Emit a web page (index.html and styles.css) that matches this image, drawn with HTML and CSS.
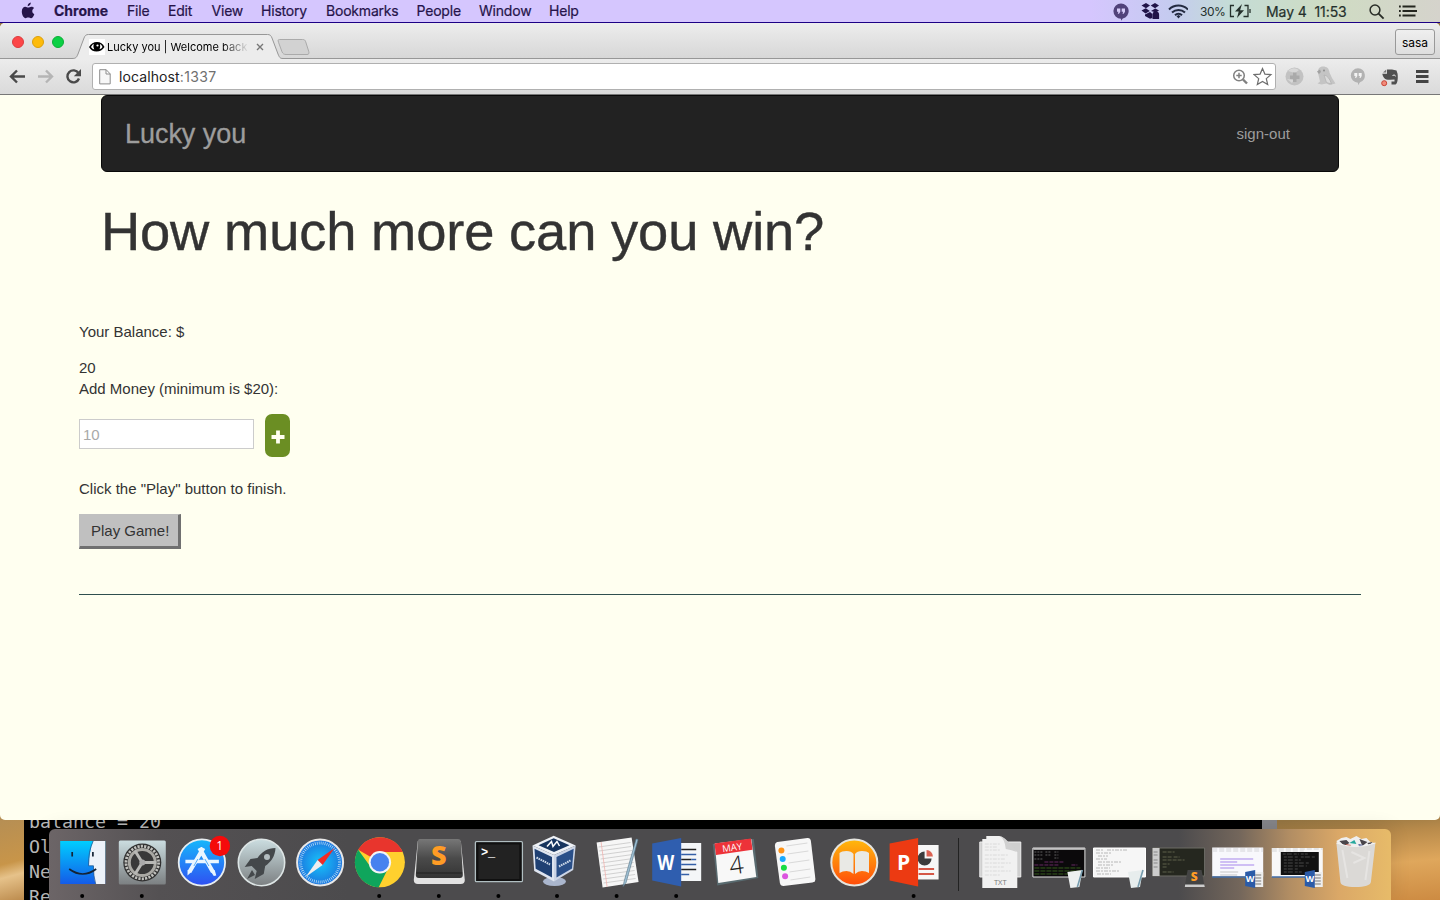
FILE: index.html
```html
<!DOCTYPE html>
<html lang="en">
<head>
<meta charset="utf-8">
<title>Lucky you | Welcome back</title>
<link rel="stylesheet" href="styles.css">
</head>
<body>
<div class="desktop">
  <header class="menubar">
    <svg class="apple" width="14" height="17" viewBox="0 0 14 17"><path d="M9.8 0.6C9.9 2.6 8.5 4.2 6.7 4.2 6.5 2.4 8 0.9 9.8 0.6zM13.3 12.2c-.7 1.9-1.900 4-3.300 4-1.100 0-1.500-.7-2.800-.7s-1.700.7-2.700.7C2.900 16.200.8 13.200.8 9.600.8 6.500 2.500 4.800 4.300 4.800c1.200 0 2.100.8 2.900.8s1.900-.9 3.300-.9c1.100 0 2 .6 2.600 1.400-2.600 1.600-2.200 5.100.2 6.100z" fill="#26144a"/></svg>
    <nav class="menus"><b>Chrome</b><span>File</span><span>Edit</span><span>View</span><span>History</span><span>Bookmarks</span><span>People</span><span>Window</span><span>Help</span></nav>
    <div class="status">
      <svg width="16" height="19" viewBox="1113 1 16 19"><path d="M1121 2.500a7.600 7.600 0 0 1 1.800 15l-1.800 2.200v-2a7.600 7.600 0 0 1 0-15.200z" fill="#51427a"/><path d="M1117 7.500h3.300v3.200l-1.300 2h-1.200l.6-2h-1.400zM1121.700 7.500h3.300v3.200l-1.300 2h-1.200l.6-2h-1.400z" fill="#d6cbf8"/></svg>
      <svg width="19" height="18" viewBox="1141 2 19 18"><path d="M1146 3l4 2.600-4 2.600-4.500-2.800zM1155 3l4 2.500-4 2.800-4.300-2.700zM1141.500 10.600l4.300-2.300 4 2.800-4.300 2.500zM1151 11l4.300-2.600 3.700 2-3 2zM1145 14.400l5-2.500 2.400 2v4.200l-2.400.7-5-2.800z" fill="#201348"/><path d="M1152.500 19v-4.200a3.300 3.300 0 0 1 6.600 0v4.200z" fill="#201348"/></svg>
      <svg width="20" height="15" viewBox="1168 3 20 15" fill="none" stroke="#232a40" stroke-width="2"><path d="M1169 8.500a13.500 13.500 0 0 1 19 0M1172 11.500a9.500 9.500 0 0 1 13 0M1175 14.300a5 5 0 0 1 7 0"/><path d="M1176.500 15.200l2-1.200 2 1.200-2 2.200z" fill="#232a40" stroke="none"/></svg>
      <span class="percent">30%</span>
      <svg width="24" height="14" viewBox="1229 4 24 14"><path d="M1234 5.500h-3.500v11h3.500M1244.500 5.500h3.500v11h-4.500M1250 9v4" fill="none" stroke="#25302c" stroke-width="1.300"/><path d="M1242 4l-7 7.500h3.700L1237 18l7-7.700h-3.900z" fill="#25302c"/></svg>
      <span class="clock">May 4&nbsp; 11:53</span>
      <svg width="16" height="16" viewBox="1369 4 16 16" fill="none" stroke="#292d27" stroke-width="1.500"><circle cx="1375" cy="10" r="4.900"/><path d="M1378.600 13.600l5 5" stroke-width="1.800"/></svg>
      <svg width="20" height="12" viewBox="1398 5 20 12" stroke="#24261f" stroke-width="1.800"><path d="M1402.500 6.500h13M1402.500 11h14.500M1402.500 15.500h13M1399 6.500h1.800M1399 11h1.800M1399 15.500h1.800"/></svg>
    </div>
  </header>

  <section class="terminal"><pre>balance = 20
Ol
Ne
Re</pre></section>

  <main class="window">
    <div class="titlebar">
      <div class="lights"><i class="red"></i><i class="amber"></i><i class="green"></i></div>
      <div class="tab">
        <svg class="tabshape" width="240" height="26" viewBox="72 33 240 26"><path d="M72 58.500c4 0 4.500-1 6-4.500l6-16c1-2.500 2-3.500 4.500-3.500h179c2.500 0 3.500 1 4.500 3.500l6 16c1.500 3.500 2 4.500 5 4.500h27v1H72z" fill="#ececec"/><path d="M72 58.500c4 0 4.500-1 6-4.500l6-16c1-2.500 2-3.500 4.500-3.500h179c2.500 0 3.500 1 4.500 3.500l6 16c1.500 3.500 2 4.500 5 4.500h29" fill="none" stroke="#979797"/><path d="M279.500 39.500h23c2 0 2.500.5 3.200 2.300l3 9.500c.7 2.300 0 3.200-1.700 3.200h-21c-2 0-3-.6-4-2.700l-3.500-9.500c-.6-2-.6-2.800 1-2.800z" fill="#d2d2d2" stroke="#aaa"/></svg>
        <div class="tabcontent">
          <svg width="16" height="16" viewBox="89 39 16 16"><path fill="#fff" d="M89 39h16v16H89z"/><path d="M89 47q3-5 8-5t7.500 5q-3 4.500-8 4.500T89 47z" fill="#000"/><path d="M91 47q1.200-2.500 2.700-3.200-.8 3 .6 5.700-2-.5-3.300-2.500zM102.500 47q-1-2.300-2.500-3 .6 3-.5 5.300 2-.5 3-2.300z" fill="#fff"/><circle cx="97.500" cy="45.500" r="1.100" fill="#fff"/></svg>
          <span class="tabtitle">Lucky you | Welcome back,</span>
          <svg width="8" height="8" viewBox="0 0 8 8"><path d="M1 1l6 6M7 1L1 7" stroke="#777" stroke-width="1.400"/></svg>
        </div>
      </div>
      <div class="profile">sasa</div>
    </div>
    <div class="toolbar">
      <svg width="92" height="35" viewBox="0 59 92 35" fill="none" stroke-width="2.400"><path d="M25 76.500H11.500M17 70.500l-6 6 6 6" stroke="#4a4a4a"/><path d="M38 76.500h13.500M46 70.500l6 6-6 6" stroke="#b5b5b5"/><path d="M78.500 73.200a6 6 0 1 0 .5 5.300" stroke="#4a4a4a"/><path d="M81 69v7.200h-7.200z" fill="#4a4a4a"/></svg>
      <div class="address">
        <svg width="12" height="16" viewBox="0 0 12 16"><path d="M.7.700h6.500l4 4.200v10H.7zM7 .7V5h4.200" fill="#f7f7f7" stroke="#8c8c8c"/></svg>
        <span class="url">localhost<em>:1337</em></span>
        <svg width="16" height="17" viewBox="1232 68 16 17" fill="none" stroke="#808080" stroke-width="1.500"><circle cx="1239" cy="75.500" r="5.300"/><path d="M1236.300 75.500h5.400M1239 72.800v5.400"/><path d="M1243 79.500l4 4" stroke-width="2.400"/></svg>
        <svg width="20" height="19" viewBox="1253 67 20 19"><path d="M1262.500 68.500l2.400 5.600 6 .5-4.600 4 1.400 6-5.200-3.200-5.200 3.200 1.400-6-4.600-4 6-.5z" fill="#fff" stroke="#6e6e6e" stroke-width="1.200"/></svg>
      </div>
      <svg class="extensions" width="164" height="35" viewBox="1276 59 164 35">
        <circle cx="1294.500" cy="76.500" r="9" fill="#c2c2c2"/><path d="M1288 71q5-5 11-1l-4 3zM1287 79l5 4 2-3" fill="#d8d8d8"/><path d="M1293 72.500h3.500v3h3v3.500h-3v3h-3.500v-3h-3v-3.500h3z" fill="#aaa"/>
        <path d="M1318 73c-.5-4 1.500-6.500 5-6.500 4 0 6 2 6.500 6l2.500 5.500 3.500 5.500-6 1.500-3-1.500-5 1-4-1 2.500-2z" fill="#c4c4c4"/><path d="M1324 75q5 1 7.500 9l-5-1.500z" fill="#dadada" stroke="#b0b0b0" stroke-width=".7"/><path d="M1320 69.500l-3 2 2 2.500 2-2z" fill="#a2a2a2"/><circle cx="1324" cy="70.500" r=".9" fill="#888"/>
        <path d="M1358 68.300a7.200 7.200 0 0 1 2 14l-2 3v-2.600a7.200 7.200 0 0 1 0-14.400z" fill="#b2b2b2"/><path d="M1354.300 73h3v3l-1.200 2h-1l.4-2h-1.200zM1358.700 73h3v3l-1.200 2h-1l.4-2h-1.200z" fill="#f3f3f3"/>
        <path d="M1387 69.500h5l4.500 1 1 3c.7 4 .2 10-2 11h-4v-3h3v-2l-4 .2c-5 .5-7.500-1.800-8.200-6h4.700z" fill="#505050"/><path d="M1383 72.500l3.200-3v3z" fill="#777"/><path d="M1392.500 75.500l2-.6 1 1.500" fill="none" stroke="#eee"/><circle cx="1384.200" cy="83.200" r="2.500" fill="#f28b7b" stroke="#c84536"/>
        <path d="M1416 71.500h12.500M1416 76.500h12.500M1416 81.500h12.500" stroke="#444" stroke-width="2.800"/>
      </svg>
    </div>
    <div class="page">
      <div class="navbar"><span class="brand">Lucky you</span><span class="signout">sign-out</span></div>
      <h1>How much more can you win?</h1>
      <div class="account">
        <p class="balance">Your Balance: $</p>
        <div class="amount">20</div>
        <div class="addlabel">Add Money (minimum is $20):</div>
        <div class="addrow">
          <div class="field">10</div>
          <div class="plus"><svg width="14" height="14" viewBox="0 0 14 14"><path d="M7 .5v13M.5 7h13" stroke="#fffff0" stroke-width="3.800"/></svg></div>
        </div>
        <p class="hint">Click the "Play" button to finish.</p>
        <div class="play">Play Game!</div>
      </div>
    </div>
  </main>

  <footer class="dock">
    <svg viewBox="52.8 829 59.4 71"><defs><linearGradient id="fb" x2="0" y2="1"><stop stop-color="#00ceff"/><stop offset="1" stop-color="#145be8"/></linearGradient><linearGradient id="grey" x2="0" y2="1"><stop stop-color="#cbdde0"/><stop offset="1" stop-color="#7c8082"/></linearGradient><linearGradient id="store" x2="0" y2="1"><stop stop-color="#16b8fb"/><stop offset="1" stop-color="#2f4ff2"/></linearGradient><linearGradient id="books" x2="0" y2="1"><stop stop-color="#ffb90d"/><stop offset="1" stop-color="#ff4b0a"/></linearGradient><linearGradient id="subl" x2="0" y2="1"><stop stop-color="#777"/><stop offset=".5" stop-color="#4a4a4a"/><stop offset="1" stop-color="#343434"/></linearGradient><radialGradient id="saf"><stop stop-color="#17c5fa"/><stop offset="1" stop-color="#1c74de"/></radialGradient></defs>
      <path d="M60 841h45v43H60z" fill="url(#fb)"/><path d="M93 841h12v43H95.500q-2-5-2-18.200h-4.800q.3-14 4.300-24.800z" fill="#edf2f9"/><path d="M93 841q-5 10-4.600 24.800h4.800q-.1 10 2.300 18.200" fill="none" stroke="#2b5c93" stroke-width=".8"/><path d="M72 852v4.500M92.700 852v4.500" stroke="#152335" stroke-width="1.700"/><path d="M69 869q13.500 10 27 0" fill="none" stroke="#152335" stroke-width="1.700"/><circle cx="82" cy="896" r="2"/></svg>
    <svg viewBox="112.2 829 59.4 71"><rect x="119" y="840.500" width="47" height="44" rx="1.500" fill="url(#grey)"/><circle cx="142.500" cy="862.500" r="19" fill="#303030"/><circle cx="142.500" cy="862.500" r="16.300" fill="none" stroke="#c1c1bd" stroke-width="2.800" stroke-dasharray="2.200 1.200"/><circle cx="142.500" cy="862.500" r="13" fill="#393939" stroke="#aaa9a4" stroke-width="3"/><path d="M142.500 862.500h14M142.500 862.500l-7.500-12M142.500 862.500l-7.500 12" stroke="#b8b8b5" stroke-width="3"/><circle cx="142.500" cy="862.500" r="3" fill="#aaa"/><circle cx="142" cy="896" r="2"/></svg>
    <svg viewBox="171.6 829 59.4 71"><circle cx="201.500" cy="862.500" r="23.200" fill="url(#store)" stroke="#e8eef1" stroke-width="1.800"/><path d="M185 861.500h33.500" stroke="#e9f6ff" stroke-width="3.600"/><path d="M203 848l-14 24M199 848l13.500 24" stroke="#e9f6ff" stroke-width="4.200"/><path d="M187.200 870l3.700 2-3.800 3.500zM210.700 872l3.600-2 1.600 5.500-2.500.5z" fill="#e9f6ff"/><path d="M193.500 866l4-7M208.500 866l-4-7" stroke="#55aef4" stroke-width="1"/><circle cx="219.500" cy="846" r="10.200" fill="#f50b0b"/><text class="d-badge" x="219.200" y="850.200">1</text></svg>
    <svg viewBox="231 829 59.4 71"><circle cx="261.500" cy="862.500" r="23.200" fill="url(#grey)" stroke="#dde5e5" stroke-width="1.600"/><path d="M275.500 848c-8 0-14 4-18 10l-7 1-5.800 8 7-1 5 5-2 8 9-5 1.500-8c6-4 10-10 10.300-18zM252 870l-5 9 8-4z" fill="#44484b"/><circle cx="267" cy="857" r="3" fill="#b3bdc0"/></svg>
    <svg viewBox="290.4 829 59.4 71"><circle cx="320.500" cy="862.500" r="23" fill="url(#saf)" stroke="#e8e8e8" stroke-width="2"/><circle cx="320.500" cy="862.500" r="19.500" fill="none" stroke="#c3e2f8" stroke-width="3" stroke-dasharray=".7 1.300"/><path d="M335 848l-12 17-5-5z" fill="#f22b26"/><path d="M306 877l12-17 5 5z" fill="#eee"/></svg>
    <svg viewBox="349.8 829 59.4 71"><circle cx="379.700" cy="862.300" r="25" fill="#ffd02e"/><path d="M379.700 862.300L358 849.800A25 25 0 0 1 402.500 852H379.700z" fill="#e8352d"/><path d="M358 849.800A25 25 0 0 0 378.500 887.300l9.700-19.600-8.500-5.400-8.700 5.400z" fill="#0fa55c"/><circle cx="379.700" cy="862.300" r="11.200" fill="#f5f5f5"/><circle cx="379.700" cy="862.300" r="9.200" fill="#4782ef"/><circle cx="379" cy="896" r="2"/></svg>
    <svg viewBox="409.2 829 59.4 71"><path d="M418 841h43l4 39q0 4-4 4h-43q-4 0-4-4z" fill="#e2e2e2"/><path d="M420 839h38q3 0 3.200 3l1.800 33q0 3-3 3h-41q-3 0-3-3l2-33q.2-3 2-3z" fill="url(#subl)"/><path d="M416.500 873h46" stroke="#202020"/><text class="d-s" x="439" y="865.500">S</text><circle cx="439" cy="896" r="2"/></svg>
    <svg viewBox="468.6 829 59.4 71"><rect x="475" y="841.700" width="47" height="40" rx="1" fill="#222" stroke="#b0bec1" stroke-width="1.300"/><rect x="477" y="843.500" width="43" height="36.500" fill="none" stroke="#101010" stroke-width="2"/><text class="d-term" x="480.500" y="856">&gt;_</text><circle cx="498" cy="896" r="2"/></svg>
    <svg viewBox="528 829 59.4 71"><ellipse cx="554.500" cy="881.500" rx="11.500" ry="4.500" fill="#aab6cd"/><path d="M553.700 835.800l22 9.700-21.700 9.500-21.500-9.500z" fill="#eef1f6"/><path d="M553.700 838.300l15.800 7-15.500 6.800-15.500-6.800z" fill="#17345e"/><path d="M532.500 845.500L554 855v26.500L534.200 871z" fill="#dfe5f0"/><path d="M575.700 845.500L554 855v26.500L573.200 870z" fill="#ccd5e6"/><path d="M534.500 848.800l17.500 8.200v20.500l-16.300-8.800z" fill="#1f4073"/><path d="M573.700 848.800L556.500 857v20.500l15.500-9z" fill="#2a4f88"/><path d="M547 846.500l4.500-5 1.500 5 4-5 2.500 4.500" fill="none" stroke="#fff" stroke-width="1.500"/><path d="M536.500 857.500l13.500 7M559 866.500l11.500-6" stroke="#cdd9e8" stroke-width="2" stroke-dasharray="1.600 .7"/><circle cx="557" cy="896" r="2"/></svg>
    <svg viewBox="587.4 829 59.4 71"><path d="M597 842.500l35-5 7 44.500-36 5.500z" fill="#f6f6f6"/><path d="M599 847l32-4.500M599.500 851l32-4.500M600 855l32.500-4.500M601 859l32-4.500M601.500 863l32-4.500M602 867l32-4.500M602.500 871l32-4.500M603 875l32-4.500M603.500 879l32-4.500M604 883l32-4.500" stroke="#c6c6c6" stroke-width=".8"/><path d="M601.500 842l6 45" stroke="#f1b3af" stroke-width=".8"/><path d="M636.500 839l-12 42.500-1 5 3-4 12-43z" fill="#9fc0d3" stroke="#547286" stroke-width=".6"/><circle cx="617" cy="896" r="2"/></svg>
    <svg viewBox="646.8 829 59.4 71"><path d="M680 843h21v38h-21z" fill="#f4f6f8"/><path d="M681 849.500h15M681 859.500h10M681 869.500h15" stroke="#222" stroke-width="1.700"/><path d="M681 854.500h15M691 859.500h5M681 864.500h15M681 874.500h8" stroke="#345fa7" stroke-width="1.700"/><path d="M652 843.500l29-5.500v48.500l-29-6z" fill="#2f5eaf"/><text class="d-office d-narrow" x="665.500" y="870" textLength="17" lengthAdjust="spacingAndGlyphs">W</text><circle cx="676" cy="896" r="2"/></svg>
    <svg viewBox="706.2 829 59.4 71"><path d="M713 844l41-5 4.500 39-41 7.500z" fill="#596b70"/><path d="M715 843.500l36.500-4.500 5 38-38 6z" fill="#f8f8f8"/><path d="M714.700 843.500l36.500-5 1.500 11.300-36.500 5.200z" fill="#ed3239"/><g transform="rotate(-8 736 862)"><text class="d-may" x="734.500" y="850.500">MAY</text><text class="d-date" x="736" y="874">4</text></g></svg>
    <svg viewBox="765.6 829 59.4 71"><path d="M778 842l30-4q3-.3 3.500 3l4.500 38q0 3-3 3.500l-29 3.500q-3 0-3.500-3l-5-37q0-3.500 2.500-4z" fill="#f7f7f7"/><path d="M787 846l21-3M788 854l21-3M789 863l21-3M790 872l21-3M791 880l20-3" stroke="#ccc" stroke-width=".7"/><circle cx="782" cy="850.500" r="3" fill="#ff9317"/><circle cx="783.300" cy="859" r="3" fill="#18a8fc"/><circle cx="784.500" cy="867.700" r="3" fill="#15dc41"/><circle cx="785.700" cy="876.300" r="3" fill="#dc55df"/></svg>
    <svg viewBox="825 829 59.4 71"><circle cx="854.300" cy="862.500" r="23" fill="url(#books)" stroke="#e5e5df" stroke-width="2"/><path d="M839.500 853q2-2 7-2 5 0 7 3v20q-3-3-7-3t-7 2zM869 853q-2-2-7-2-5 0-7 3v20q3-3 7-3t7 2z" fill="#e9e9e5"/></svg>
    <svg viewBox="884.4 829 59.4 71"><path d="M917 845h22v34.500h-22z" fill="#f7f7f7"/><path d="M925 851.500a7 7 0 1 0 7 7h-7z" fill="#3b3b3b"/><path d="M927 850a6.500 6.500 0 0 1 6.300 6.500H927z" fill="#dc6252"/><path d="M919 869h15.500M919 874h15.500" stroke="#d55747" stroke-width="1.800"/><path d="M890 843.500l28.500-5.500v48.500l-28.500-6z" fill="#ec3a12"/><text class="d-office" x="904" y="870">P</text><circle cx="914" cy="896" r="2"/></svg>
    <div class="separator"></div>
    <svg viewBox="971.2 829 59.4 71"><path d="M980 842h41v35h-41z" fill="#cfcfcf" stroke="#eee"/><path d="M982.500 839h4v-3h13q5 1 9 7t9 9v36h-35z" fill="#f1f1f1"/><path d="M1000 836q5 3 6 13 6 1 11 3-3-6-7-8-4-6-10-8z" fill="#d0d0d0"/><path d="M985 844h16M985 847h13M985 850h16M985 855h24M985 859h20M985 863h26M985 867h19M985 871h26M985 875h16" stroke="#d6d6d6" stroke-width=".8" stroke-dasharray="4 1 2 1"/><text class="d-txt" x="1000.500" y="885">TXT</text></svg>
    <svg viewBox="1030.6 829 59.4 71"><path d="M1033.500 848h52v29h-52z" fill="#0b090b" stroke="#e4e4e4"/><path d="M1034 849h51" stroke="#ddd" stroke-width="1.500"/><path d="M1035 852h8m3 0h5m4 0h4M1035 855h8m3 0h5m4 0h4M1035 859h8m12-1h4" stroke="#777" stroke-width=".8" stroke-dasharray="2 1"/><path d="M1035 865h25m-15-3h20m7 3h6" stroke="#7d3279" stroke-width=".8" stroke-dasharray="4 1"/><path d="M1035 868h46M1035 871h46M1035 874h46" stroke="#365e1d" stroke-dasharray="5 1"/><path d="M1068 872l15-2-3 17-9 1z" fill="#edf0f0"/><path d="M1083 870l-5 17" stroke="#759bad" stroke-width="1.600"/></svg>
    <svg viewBox="1090 829 59.4 71"><path d="M1093.500 848h52v29h-52z" fill="#f6f6f6" stroke="#fff"/><path d="M1096 850h7m4 0h20M1096 853h15M1098 856h10M1096 859h11M1098 862h24M1098 865h16M1096 868h14M1096 871h23M1097 874h14" stroke="#aaa" stroke-width=".8" stroke-dasharray="4 1 2 1"/><path d="M1128 872l15-2-3 17-9 1z" fill="#e7eded"/><path d="M1143 870l-5 17" stroke="#759bad" stroke-width="1.600"/></svg>
    <svg viewBox="1149.4 829 59.4 71"><path d="M1153 848h52v28h-52z" fill="#25271f" stroke="#6c6c65"/><path d="M1153 848h7v28h-7z" fill="#ccc"/><path d="M1154 852h4m-4 3h4m-4 5h4m-4 3h4m-4 4h4" stroke="#888"/><path d="M1163 852h12m-12 5h9m2 0h6m-17 3h22m-22 4h7m-7 3h5m-5 5h11" stroke="#6c7055" stroke-width=".8" stroke-dasharray="4 1"/><path d="M1188 870h14l3 17h-20z" fill="#444"/><path d="M1185.500 884.500l-.3 2.500h20l-.5-2.500z" fill="#ccc"/><text class="d-mini" x="1194.500" y="881">S</text></svg>
    <svg viewBox="1208.8 829 59.4 71"><path d="M1212 847.500h51v29h-51z" fill="#f8f8fc"/><path d="M1212 849h51m-51 2h51" stroke="#d5d5d9" stroke-dasharray="5 2"/><path d="M1220 859h33m-33 3h17m-17 3h34m-34 3h14" stroke="#a686ec"/><path d="M1220 872h18m-18 3h17" stroke="#c4c4c4"/><path d="M1212 877h40" stroke="#416ca9" stroke-width="1.500"/><path d="M1253 872h10v15h-10z" fill="#eee"/><path d="M1255 875h6m-6 3h6m-6 3h6m-6 3h6" stroke="#777"/><path d="M1245 872l10-2v18l-10-2z" fill="#2b5ba8"/><text class="d-mini-w" x="1250" y="882">W</text></svg>
    <svg viewBox="1268.2 829 59.4 71"><path d="M1272 848h51v29h-51z" fill="#f8f8f8"/><path d="M1272 849h51m-51 2h32" stroke="#d5d5d5" stroke-dasharray="5 2"/><path d="M1281 852h38v23h-38z" fill="#111"/><path d="M1283 854h16m2 0h7m-24 3h14m3 0h14m-31 3h17m-17 3h25m-25 3h23m-23 3h15m-15 3h18" stroke="#555" stroke-width=".8" stroke-dasharray="3 1 5 2"/><path d="M1272 877h40" stroke="#416ca9" stroke-width="1.500"/><path d="M1313 872h10v15h-10z" fill="#eee"/><path d="M1315 875h6m-6 3h6m-6 3h6m-6 3h6" stroke="#777"/><path d="M1305 872l10-2v18l-10-2z" fill="#2b5ba8"/><text class="d-mini-w" x="1310" y="882">W</text></svg>
    <svg viewBox="1327.6 829 59.4 71"><path d="M1337 841l5-3 5-1 4 2 6-3 5 3 5-1 4 4 4 1-3 6h-31z" fill="#efefef"/><path d="M1340 841l5 5 5-3-3-3zM1360 839l8 3-5 4zM1368 843l5-1-3 4z" fill="#49454a"/><path d="M1350 843l5-3 2 4z" fill="#27a89d"/><path d="M1346 844l6 1-3 3z" fill="#bd5847"/><path d="M1359 844l5 1-4 3z" fill="#46538c"/><path d="M1337 843q19 7 39 0l-4.500 39q-1 5-15.500 5t-15-5z" fill="#dbd9d6"/><path d="M1337 843q19 7 39 0" fill="none" stroke="#f4f4f4"/><path d="M1343 850l5 28M1352 852l13 6-11 5M1370 851l-4 29" fill="none" stroke="#fff" stroke-width="2" opacity=".3"/></svg>
  </footer>
</div>
</body>
</html>
```
FILE: styles.css
```css
* { box-sizing: border-box; }
body { margin: 0; }
svg { display: block; flex: none; }
.desktop { position: relative; width: 1440px; height: 900px; overflow: hidden; display: flex; flex-direction: column; font-family: Inter, sans-serif; background: linear-gradient(175deg, #967642 91%, #b98b4b 93%, #dfa75c 96%, #cd8b42); }
.desktop::before { content: ""; position: absolute; left: 0; top: 815px; width: 24px; height: 85px; background: linear-gradient(165deg, #b48e55, #c89549 55%, #e6c28a 70%, #bc8b4d); }
.menubar { height: 23px; flex: none; display: flex; align-items: center; padding-left: 21px; border-bottom: 1px solid #1c0085; background: linear-gradient(90deg, #d5c6fe 1090px, #c5cbf0 1170px, #c4dcd6 1230px, #cfdcc3 1330px, #d5d3cc); color: #26144a; font-size: 14px; }
.apple { margin-bottom: 1px; }
.menus { display: grid; grid-template-columns: 73px 41px 43.5px 49.500px 65px 90.500px 62.500px 70px 60px; margin-left: 19px; letter-spacing: -.2px; font-size: 14px; line-height: 22px; -webkit-text-stroke: .2px; }
.menus b { letter-spacing: 0; }
.status { display: flex; align-items: center; margin-left: auto; padding-right: 22px; color: #25302c; }
.status svg:nth-of-type(2) { margin-left: 12px; }
.status svg:nth-of-type(3) { margin-left: 8px; }
.percent { font-size: 12px; width: 29px; margin-left: 12px; letter-spacing: -.5px; }
.clock { width: 103px; margin-left: 13px; white-space: nowrap; letter-spacing: -.08px; -webkit-text-stroke: .2px; }
.status svg:nth-of-type(5) { margin-top: 2px; }
.status svg:nth-of-type(6) { margin-left: 13px; }
.terminal { position: absolute; left: 24px; top: 815px; width: 1253px; height: 85px; background: #000; border-right: 15px solid #858589; overflow: hidden; }
.terminal pre { margin: -6px 0 0 5px; font: 18.300px/25px "DejaVu Sans Mono", monospace; color: #b8b8b8; }
.window { position: relative; width: 1440px; height: 797px; flex: none; border-radius: 5px; overflow: hidden; background: #fffff0; display: flex; flex-direction: column; }
.titlebar { height: 36px; flex: none; display: flex; background: linear-gradient(#ededed, #d7d7d7); border-bottom: 1px solid #979797; }
.lights { display: flex; gap: 8px; padding: 13px 0 0 12px; width: 72px; }
.lights i { width: 12px; height: 12px; border-radius: 50%; }
.red { background: #fc4648; border: 1px solid #dc3c3e; }
.amber { background: #fdbb0b; border: 1px solid #dca00b; }
.green { background: #0bd044; border: 1px solid #0cae38; }
.tab { position: relative; width: 240px; height: 36px; padding: 16px 0 0 17px; }
.tabshape { position: absolute; left: 0; top: 10px; }
.tabcontent { position: relative; display: flex; align-items: center; height: 16px; }
.tabtitle { width: 141px; margin: 0 8px 0 2px; font-size: 11px; letter-spacing: .02px; white-space: nowrap; overflow: hidden; -webkit-mask-image: linear-gradient(90deg, #000 115px, transparent 142px); }
.profile { width: 40px; height: 26px; margin: 6px 5px 0 auto; border: 1px solid #999; border-radius: 3px; background: linear-gradient(#efefef, #dedede); font-size: 12px; line-height: 25px; text-align: center; }
.toolbar { height: 36px; flex: none; display: flex; background: linear-gradient(#ececec, #dadada); border-bottom: 1px solid #777; }
.address { width: 1184px; height: 27px; margin-top: 4px; display: flex; align-items: center; background: #fff; border: 1px solid #b0b0b0; border-radius: 3px; padding: 0 2px 0 6px; }
.url { flex: 1; margin-left: 8px; font-size: 14px; letter-spacing: .1px; color: #222; }
.url em { font-style: normal; color: #707070; letter-spacing: .4px; }
.address svg:last-child { margin-left: 5px; }
.page { flex: 1; color: #333; font: 15px/21px "Liberation Sans", Arial, sans-serif; }
.navbar { width: 1238px; height: 77px; margin: 0 auto; padding: 0 48px 0 23px; display: flex; align-items: center; justify-content: space-between; background: #222; border: 1px solid #080808; border-radius: 6px; color: #9d9d9d; }
.brand { font-size: 27px; letter-spacing: -.05px; padding-top: 2px; -webkit-text-stroke: .3px; }
.signout { letter-spacing: .03px; }
h1 { font-size: 54.300px; line-height: 60px; font-weight: 400; letter-spacing: -.16px; margin: 30px 0 0 101px; -webkit-text-stroke: .4px; }
.account { margin: 59px 79px 0; height: 274px; border-bottom: 1px solid #2f4f4f; }
.balance { margin: 0 0 15px; }
.addrow { display: flex; margin-top: 15px; height: 43px; }
.field { width: 175px; height: 30px; margin: 5px 11px 0 0; padding: 4px 3px; background: #fff; border: 1px solid #ccc; color: #a9a9a9; }
.plus { width: 25px; height: 43px; border-radius: 7px; background: #6b8e23; display: flex; justify-content: center; align-items: center; padding-top: 2px; }
.hint { margin: 21px 0 15px; }
.play { width: 102px; height: 35px; background: #c0c0c0; border: solid #707070; border-width: 1px 3px 3px 1px; border-top-color: #c0c0c0; border-left-color: #c0c0c0; padding: 5px 0 0 11px; white-space: nowrap; }
.dock { position: absolute; left: 49px; top: 829px; width: 1342px; height: 71px; padding-left: 3.800px; display: grid; grid-template-columns: repeat(15, 59.400px) 27.400px repeat(7, 59.400px); border-radius: 6px 6px 0 0; background: linear-gradient(90deg, #6c6567, #545153 110px, #4c4b4d 300px, #4c4b4d 1130px, #73665b 1190px, #b18d63 1240px, #dba867 1290px, #e7bb69); box-shadow: 0 0 20px rgba(0, 0, 0, .12); }
.dock svg { width: 59.400px; height: 71px; overflow: visible; }
.separator { width: 1px; height: 53px; margin: 9px 0 0 14px; background: #222; }
.dock text { text-anchor: middle; font-family: "Open Sans", sans-serif; fill: #fff; }
.dock .d-badge { font-size: 12px; }
.dock .d-s { font: 800 27px "Open Sans", sans-serif; fill: #ff9c25; }
.dock .d-term { text-anchor: start; font: bold 12px "Liberation Mono", monospace; }
.dock .d-office { font: bold 21px "Open Sans", sans-serif; }
.dock .d-may { font-size: 9.500px; }
.dock .d-date { font-size: 25px; font-weight: 300; fill: #222; }
.dock .d-txt { font-size: 7.500px; fill: #777; }
.dock .d-mini { font: 800 12px "Open Sans", sans-serif; fill: #ff9c25; }
.dock .d-mini-w { font: bold 9px "Open Sans", sans-serif; }
```
